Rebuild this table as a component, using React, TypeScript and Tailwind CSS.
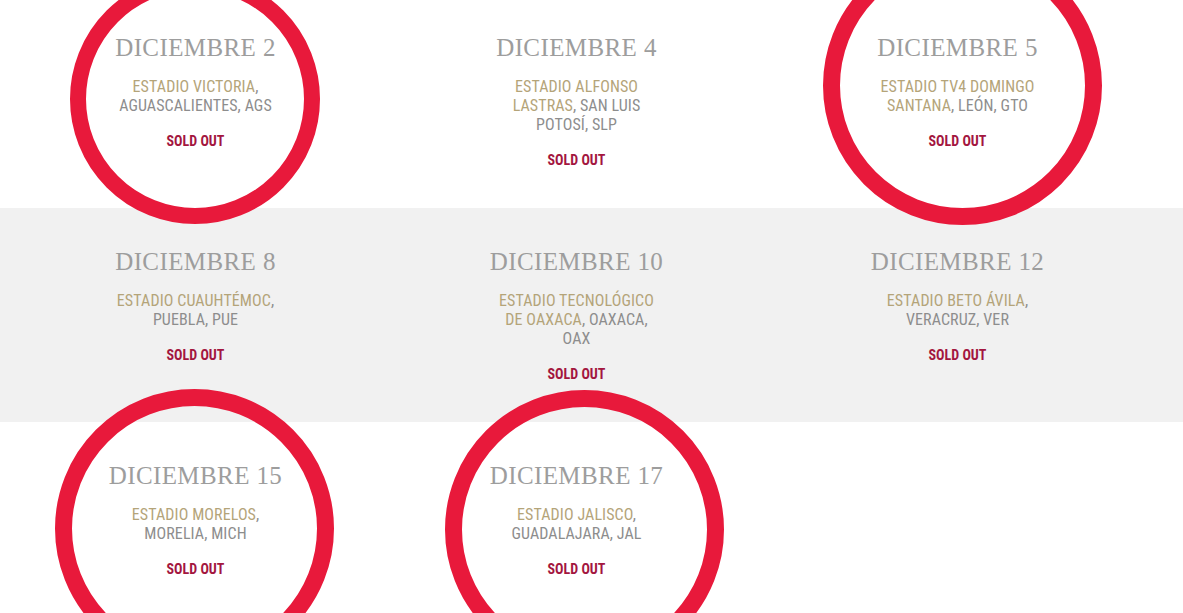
import React from 'react';

type Seg = { text: string; gold?: boolean };

interface Show {
  date: string;
  lines: Seg[][];
}

const rows: Show[][] = [
  [
    {
      date: 'DICIEMBRE 2',
      lines: [
        [{ text: 'ESTADIO VICTORIA', gold: true }, { text: ',' }],
        [{ text: 'AGUASCALIENTES, AGS' }],
      ],
    },
    {
      date: 'DICIEMBRE 4',
      lines: [
        [{ text: 'ESTADIO ALFONSO', gold: true }],
        [{ text: 'LASTRAS', gold: true }, { text: ', SAN LUIS' }],
        [{ text: 'POTOSÍ, SLP' }],
      ],
    },
    {
      date: 'DICIEMBRE 5',
      lines: [
        [{ text: 'ESTADIO TV4 DOMINGO', gold: true }],
        [{ text: 'SANTANA', gold: true }, { text: ', LEÓN, GTO' }],
      ],
    },
  ],
  [
    {
      date: 'DICIEMBRE 8',
      lines: [
        [{ text: 'ESTADIO CUAUHTÉMOC', gold: true }, { text: ',' }],
        [{ text: 'PUEBLA, PUE' }],
      ],
    },
    {
      date: 'DICIEMBRE 10',
      lines: [
        [{ text: 'ESTADIO TECNOLÓGICO', gold: true }],
        [{ text: 'DE OAXACA', gold: true }, { text: ', OAXACA,' }],
        [{ text: 'OAX' }],
      ],
    },
    {
      date: 'DICIEMBRE 12',
      lines: [
        [{ text: 'ESTADIO BETO ÁVILA', gold: true }, { text: ',' }],
        [{ text: 'VERACRUZ, VER' }],
      ],
    },
  ],
  [
    {
      date: 'DICIEMBRE 15',
      lines: [
        [{ text: 'ESTADIO MORELOS', gold: true }, { text: ',' }],
        [{ text: 'MORELIA, MICH' }],
      ],
    },
    {
      date: 'DICIEMBRE 17',
      lines: [
        [{ text: 'ESTADIO JALISCO', gold: true }, { text: ',' }],
        [{ text: 'GUADALAJARA, JAL' }],
      ],
    },
  ],
];

const condensed = { fontFamily: '"Roboto Condensed", "Liberation Sans Narrow", Roboto, sans-serif' };

const ShowCard = ({ show }: { show: Show }) => (
  <div className="flex flex-col items-center text-center">
    <h3 className="font-['Liberation_Serif',serif] text-[25px] leading-[30px] tracking-[0.4px] text-[#9d9d9d]">
      {show.date}
    </h3>
    <p className="mt-[14px] text-[16px] leading-[19px] tracking-[0.1px] text-[#8d8d8d]" style={condensed}>
      {show.lines.map((line, i) => (
        <span key={i} className="block">
          {line.map((seg, j) => (
            <span key={j} className={seg.gold ? 'text-[#b4a479]' : ''}>
              {seg.text}
            </span>
          ))}
        </span>
      ))}
    </p>
    <span className="mt-[18px] text-[14px] leading-[16px] font-bold text-[#a3163f]" style={condensed}>
      SOLD OUT
    </span>
  </div>
);

export default function App() {
  return (
    <div className="relative h-[613px] w-full overflow-hidden bg-white">
      {rows.map((row, r) => (
        <div
          key={r}
          className={
            r === 0
              ? 'pt-[33px] pb-[40px] pl-[5px] bg-white'
              : r === 1
              ? 'pt-[39px] pb-[40px] pl-[5px] bg-[#f1f1f1]'
              : 'pt-[39px] pb-[40px] pl-[5px] bg-white'
          }
        >
          <div className="grid grid-cols-[381px_381px_381px]">
            {row.map((show) => (
              <ShowCard key={show.date} show={show} />
            ))}
          </div>
        </div>
      ))}

      {/* red marker circles over the sold out dates */}
      <div className="absolute left-[70px] top-[-26px] h-[250px] w-[250px] rounded-full border-[16px] border-[#e8193b]" />
      <div className="absolute left-[823px] top-[-54px] h-[279px] w-[279px] rounded-full border-[17px] border-[#e8193b]" />
      <div className="absolute left-[55px] top-[389px] h-[279px] w-[279px] rounded-full border-[17px] border-[#e8193b]" />
      <div className="absolute left-[445px] top-[390px] h-[279px] w-[279px] rounded-full border-[17px] border-[#e8193b]" />
    </div>
  );
}
